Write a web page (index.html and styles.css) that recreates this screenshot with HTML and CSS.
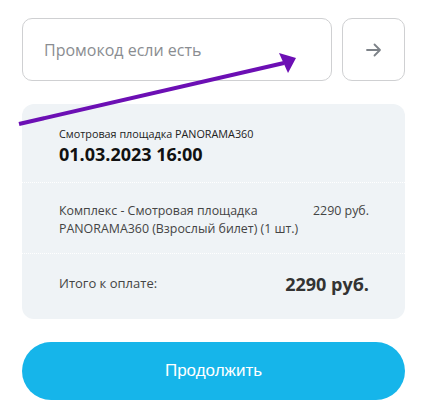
FILE: index.html
```html
<!DOCTYPE html>
<html lang="ru">
<head>
    <meta charset="UTF-8">
    <meta name="viewport" content="width=device-width, initial-scale=1.0">
    <title>Оформление заказа</title>
    <link rel="stylesheet" href="styles.css">
</head>
<body>

    <div class="checkout">
        <div class="promo">
            <input class="promo-input" type="text" placeholder="Промокод если есть">
            <button class="promo-btn" aria-label="Применить">
                <svg width="16" height="14" viewBox="0 0 16 14">
                    <path d="M1 7h13M8.5 1.5 14 7l-5.5 5.5" fill="none" stroke="#7d8288" stroke-width="1.8" stroke-linecap="round" stroke-linejoin="round"/>
                </svg>
            </button>
        </div>

        <div class="order">
            <div class="order-head">
                <p class="order-place">Смотровая площадка PANORAMA360</p>
                <p class="order-date">01.03.2023 16:00</p>
            </div>
            <div class="order-item">
                <p class="item-name">Комплекс - Смотровая площадка PANORAMA360 (Взрослый билет) (1 шт.)</p>
                <p class="item-price">2290 руб.</p>
            </div>
            <div class="order-total">
                <p class="total-label">Итого к оплате:</p>
                <p class="total-price">2290 руб.</p>
            </div>
        </div>

        <button class="continue">Продолжить</button>
    </div>

    <!-- annotation arrow drawn over the page -->
    <svg class="annotation" width="428" height="416" viewBox="0 0 428 416">
        <line x1="19" y1="124" x2="284" y2="63" stroke="#6c0fb4" stroke-width="4"/>
        <polygon points="296,58 279,53 288,73" fill="#6c0fb4"/>
    </svg>

</body>
</html>
```

FILE: styles.css
```css
* {
    box-sizing: border-box;
    margin: 0;
    padding: 0;
}

body {
    font-family: "Open Sans", sans-serif;
    background: #fff;
    color: #222;
}

.checkout {
    padding: 18px 23px 0 22px;
}

.promo {
    display: flex;
    gap: 10px;
}

.promo-input {
    flex: 1;
    height: 63px;
    border: 1px solid #cfd0d2;
    border-radius: 10px;
    padding: 0 21px;
    font-family: "Open Sans", sans-serif;
    font-size: 16px;
    color: #333;
    outline: none;
}

.promo-input::placeholder {
    color: #8a8d91;
}

.promo-btn {
    width: 63px;
    height: 63px;
    border: 1px solid #cfd0d2;
    border-radius: 10px;
    background: #fff;
    display: flex;
    align-items: center;
    justify-content: center;
    cursor: pointer;
}

.order {
    margin-top: 23px;
    background: #eff3f6;
    border-radius: 12px;
}

.order-head {
    padding: 22px 36px 16px 37px;
    border-bottom: 1px dotted #fff;
}

.order-place {
    font-size: 10.8px;
    line-height: 16px;
    color: #222;
}

.order-date {
    font-size: 18px;
    font-weight: bold;
    line-height: 24px;
    color: #111;
}

.order-item {
    display: flex;
    justify-content: space-between;
    gap: 10px;
    padding: 19px 36px 15px 37px;
    border-bottom: 1px dotted #fff;
    font-size: 12.4px;
    line-height: 18px;
    color: #444;
}

.item-name {
    width: 250px;
}

.item-price {
    white-space: nowrap;
}

.order-total {
    display: flex;
    justify-content: space-between;
    align-items: flex-start;
    padding: 19px 36px 24px 37px;
}

.total-label {
    font-size: 13px;
    line-height: 20px;
    color: #444;
}

.total-price {
    font-size: 18px;
    font-weight: bold;
    line-height: 22px;
    color: #333;
}

.continue {
    display: block;
    width: 100%;
    height: 58px;
    margin-top: 23px;
    border: none;
    border-radius: 29px;
    background: #16b5ea;
    color: #fff;
    font-family: "Liberation Sans", Arial, sans-serif;
    font-size: 17px;
    cursor: pointer;
}

.annotation {
    position: absolute;
    top: 0;
    left: 0;
    pointer-events: none;
}
```
